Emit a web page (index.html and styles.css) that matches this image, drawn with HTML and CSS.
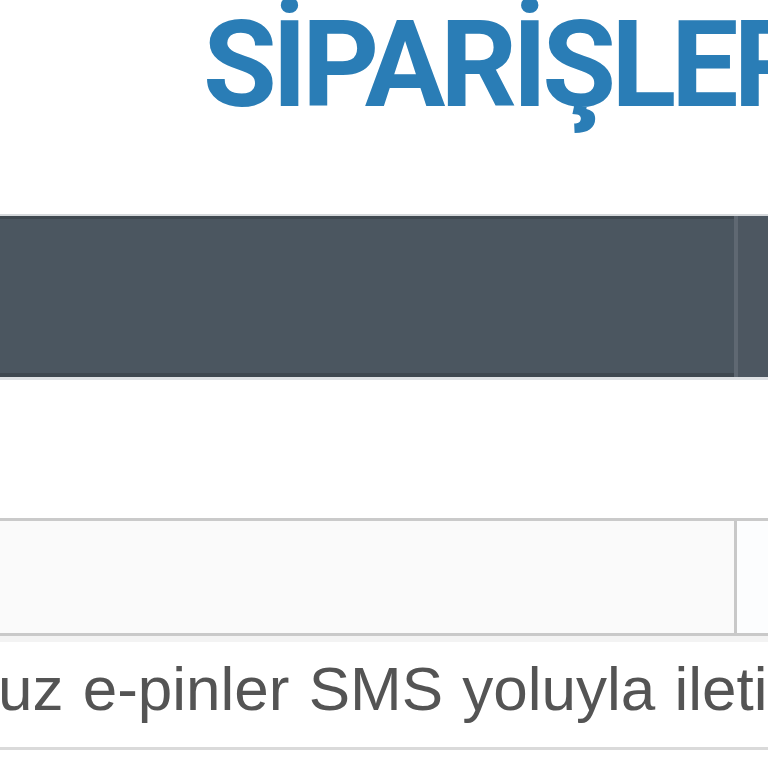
FILE: index.html
```html
<!DOCTYPE html>
<html lang="tr">
<head>
<meta charset="utf-8">
<title>Siparişler</title>
<link rel="stylesheet" href="styles.css">
</head>
<body>
<div class="page">
  <h1 class="title">SİPARİŞLER</h1>
  <div class="thead">
    <div class="cell main"></div>
    <div class="cell side"></div>
  </div>
  <div class="row">
    <div class="cell main"></div>
    <div class="cell side"></div>
  </div>
  <p class="note">uz e-pinler SMS yoluyla iletilmektedir.</p>
</div>
</body>
</html>
```
FILE: styles.css
```css
html, body {
  margin: 0;
  padding: 0;
  background: #ffffff;
  overflow: hidden;
}
.page {
  width: 768px;
  height: 768px;
  overflow: hidden;
  display: flex;
  flex-direction: column;
}
.title {
  margin: 0;
  padding-left: 203px;
  height: 214px;
  box-sizing: border-box;
  font-family: Roboto, "Liberation Sans", sans-serif;
  font-weight: 700;
  font-size: 120px;
  line-height: 130px;
  letter-spacing: -5px;
  color: #2a7db6;
  white-space: nowrap;
}
.thead {
  display: grid;
  grid-template-columns: 734px 1fr;
  height: 166px;
  box-sizing: border-box;
  border-top: 2px solid #d6d9dc;
  border-bottom: 3px solid #dfe2e5;
  background: #4b5660;
  box-shadow: inset 0 3px 0 #3f4850, inset 0 -4px 0 #3f4850;
}
.thead .side {
  border-left: 4px solid #5f6872;
  background: #4d5761;
}
.row {
  display: grid;
  grid-template-columns: 734px 1fr;
  margin-top: 138px;
  height: 118px;
  box-sizing: border-box;
  border-top: 3px solid #cacaca;
  border-bottom: 3px solid #c9c9c9;
  background: #fafafa;
}
.row .side {
  border-left: 3px solid #c8c8c8;
  background: #fcfdfe;
}
.note {
  margin: 0 0 0 -2px;
  height: 114px;
  box-sizing: border-box;
  border-top: 6px solid #f3f3f3;
  border-bottom: 3px solid #dadada;
  font-family: "Liberation Sans", Arial, sans-serif;
  font-size: 62px;
  line-height: 94px;
  word-spacing: 2px;
  color: #545454;
  white-space: nowrap;
}
```
